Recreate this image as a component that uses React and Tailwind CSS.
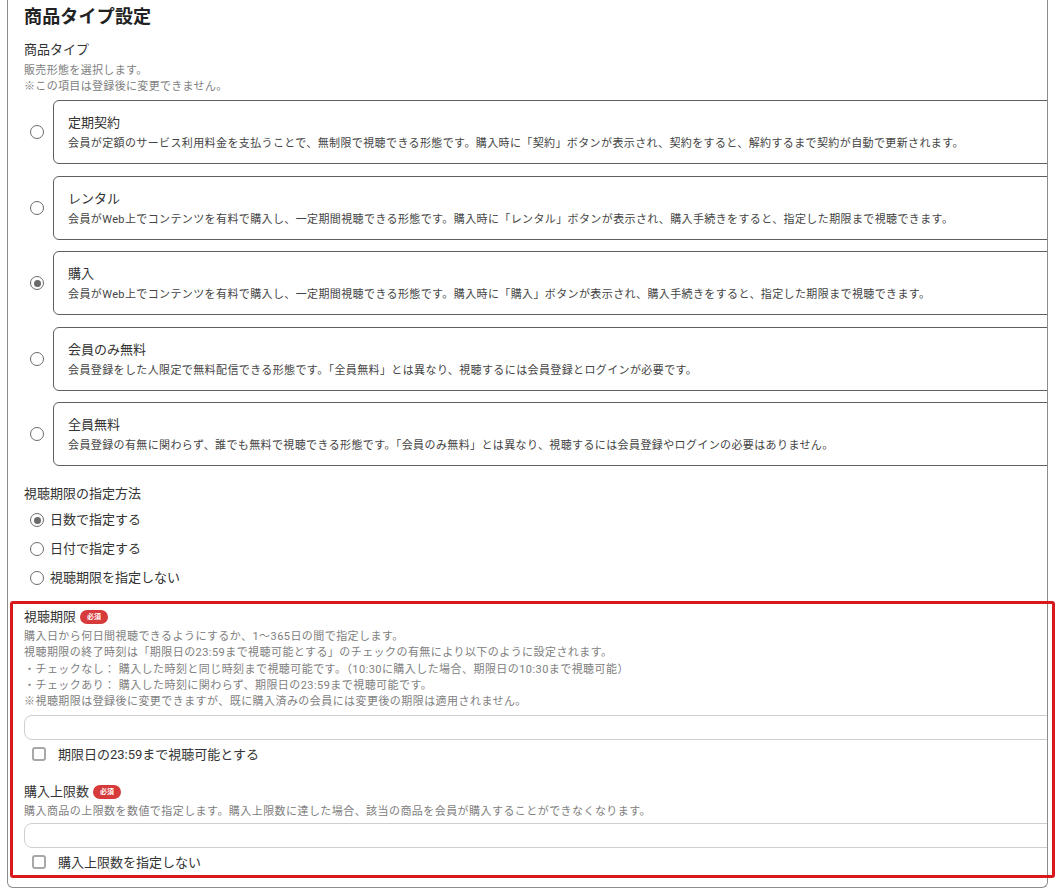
import React from "react";

const cards = [
  {
    title: "定期契約",
    desc: "会員が定額のサービス利用料金を支払うことで、無制限で視聴できる形態です。購入時に「契約」ボタンが表示され、契約をすると、解約するまで契約が自動で更新されます。",
    checked: false,
  },
  {
    title: "レンタル",
    desc: "会員がWeb上でコンテンツを有料で購入し、一定期間視聴できる形態です。購入時に「レンタル」ボタンが表示され、購入手続きをすると、指定した期限まで視聴できます。",
    checked: false,
  },
  {
    title: "購入",
    desc: "会員がWeb上でコンテンツを有料で購入し、一定期間視聴できる形態です。購入時に「購入」ボタンが表示され、購入手続きをすると、指定した期限まで視聴できます。",
    checked: true,
  },
  {
    title: "会員のみ無料",
    desc: "会員登録をした人限定で無料配信できる形態です。「全員無料」とは異なり、視聴するには会員登録とログインが必要です。",
    checked: false,
  },
  {
    title: "全員無料",
    desc: "会員登録の有無に関わらず、誰でも無料で視聴できる形態です。「会員のみ無料」とは異なり、視聴するには会員登録やログインの必要はありません。",
    checked: false,
  },
];

function Radio({ checked }) {
  return (
    <span className="flex h-[14px] w-[14px] shrink-0 items-center justify-center rounded-full border-[1.5px] border-[#6b6b6b] bg-white">
      {checked && <span className="h-[7px] w-[7px] rounded-full bg-[#6b6b6b]" />}
    </span>
  );
}

function Checkbox() {
  return <span className="h-[14px] w-[14px] shrink-0 rounded-[3px] border-2 border-[#a8a8a8] bg-white" />;
}

function Badge() {
  return (
    <span className="ml-[4px] flex h-[14px] w-[28px] items-center justify-center rounded-full bg-[#d63a3a] text-[7px] font-bold leading-none text-white">
      必須
    </span>
  );
}

export default function App() {
  return (
    <div className="relative min-h-[890px] w-[1064px] bg-white font-[Roboto,'Noto_Sans_CJK_JP',sans-serif] text-[#333]">
      <div className="ml-[7px] w-[1041px] overflow-hidden rounded-b-[6px] border-x border-b border-[#8c8c8c] pb-[15px]">
        <div className="pl-[16px]">
          <h1 className="mt-[5px] h-[24px] text-[18px] font-bold leading-[24px] tracking-[0.01em] text-[#222]">商品タイプ設定</h1>
          <div className="mt-[11px] text-[13px] leading-[20px]">商品タイプ</div>
          <div className="mt-[3px] text-[11px] leading-[16px] tracking-[0.03em] text-[#808080]">
            <div>販売形態を選択します。</div>
            <div>※この項目は登録後に変更できません。</div>
          </div>
        </div>

        <div className="mt-[5px] flex flex-col gap-[11.5px]">
          {cards.map((c) => (
            <div key={c.title} className="flex items-center">
              <div className="ml-[22px] mr-[9px]">
                <Radio checked={c.checked} />
              </div>
              <div className="h-[64px] w-[1100px] shrink-0 rounded-[6px] border border-[#5f5f5f] pl-[14px] pt-[13px]">
                <div className="text-[13px] leading-[18px]">{c.title}</div>
                <div className="mt-[4px] whitespace-nowrap text-[11px] leading-[16px] tracking-[0.035em] text-[#444]">
                  {c.desc}
                </div>
              </div>
            </div>
          ))}
        </div>

        <div className="pl-[16px]">
          <div className="mt-[18px] text-[13px] leading-[20px]">視聴期限の指定方法</div>
          <div className="mt-[1.5px] flex flex-col">
            {[
              ["日数で指定する", true],
              ["日付で指定する", false],
              ["視聴期限を指定しない", false],
            ].map(([label, checked]) => (
              <label key={label} className="flex h-[29px] items-center gap-[6px] pl-[6px] text-[13px]">
                <Radio checked={checked} />
                <span>{label}</span>
              </label>
            ))}
          </div>

          <div className="mt-[14.5px] flex h-[20px] items-center">
            <span className="text-[13px] leading-[20px]">視聴期限</span>
            <Badge />
          </div>
          <div className="mt-[2px] whitespace-nowrap text-[11px] leading-[16.25px] tracking-[0.04em] text-[#808080]">
            <div>購入日から何日間視聴できるようにするか、1〜365日の間で指定します。</div>
            <div>視聴期限の終了時刻は「期限日の23:59まで視聴可能とする」のチェックの有無により以下のように設定されます。</div>
            <div>・チェックなし： 購入した時刻と同じ時刻まで視聴可能です。（10:30に購入した場合、期限日の10:30まで視聴可能）</div>
            <div>・チェックあり： 購入した時刻に関わらず、期限日の23:59まで視聴可能です。</div>
            <div>※視聴期限は登録後に変更できますが、既に購入済みの会員には変更後の期限は適用されません。</div>
          </div>
          <div className="mt-[5px] h-[25px] w-[1100px] rounded-[8px] border border-[#cfcfcf] bg-white" />
          <label className="mt-[4px] flex h-[20px] items-center gap-[12px] pl-[8px] text-[13px]">
            <Checkbox />
            <span>期限日の23:59まで視聴可能とする</span>
          </label>

          <div className="mt-[18px] flex h-[20px] items-center">
            <span className="text-[13px] leading-[20px]">購入上限数</span>
            <Badge />
          </div>
          <div className="mt-[2px] whitespace-nowrap text-[11px] leading-[16px] tracking-[0.04em] text-[#808080]">
            購入商品の上限数を数値で指定します。購入上限数に達した場合、該当の商品を会員が購入することができなくなります。
          </div>
          <div className="mt-[3px] h-[25px] w-[1100px] rounded-[8px] border border-[#cfcfcf] bg-white" />
          <label className="mt-[4px] flex h-[20px] items-center gap-[12px] pl-[8px] text-[13px]">
            <Checkbox />
            <span>購入上限数を指定しない</span>
          </label>
        </div>
      </div>

      <div className="pointer-events-none absolute left-[10px] top-[601px] h-[277px] w-[1045px] rounded-[3px] border-[3px] border-[#d7191c]" />
    </div>
  );
}
